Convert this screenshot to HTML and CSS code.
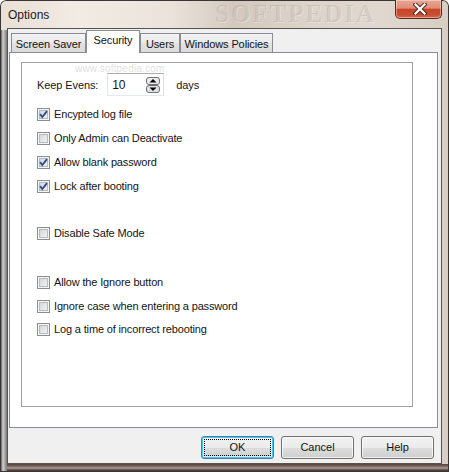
FILE: index.html
```html
<!DOCTYPE html>
<html>
<head>
<meta charset="utf-8">
<link rel="stylesheet" href="styles.css">
</head>
<body>
<div class="window">
  <div class="titlebar">
    <span class="title">Options</span>
    <span class="wm-title">SOFTPEDIA</span>
    <div class="close">
      <svg width="14" height="12" viewBox="0 0 14 12"><path d="M2.5 1.5 L11.5 10.5 M11.5 1.5 L2.5 10.5" stroke="#4a2a24" stroke-width="4.2" stroke-linecap="square"/><path d="M2.5 1.5 L11.5 10.5 M11.5 1.5 L2.5 10.5" stroke="#fff" stroke-width="2.2" stroke-linecap="square"/></svg>
    </div>
  </div>
  <div class="client">
    <div class="tabs">
      <div class="tab t-screen">Screen Saver</div>
      <div class="tab active t-sec">Security</div>
      <div class="tab t-users">Users</div>
      <div class="tab t-wp">Windows Policies</div>
    </div>
    <div class="panel">
      <div class="group">
        <span class="wm-url">www.softpedia.com</span>
        <div class="keep-row">
          <span>Keep Evens:</span>
          <div class="spin">
            <span class="spin-val">10</span>
            <svg class="spin-btn" width="14" height="16" viewBox="0 0 14 16">
              <rect x="0.5" y="0.5" width="13" height="7" rx="2.5" fill="#ececec" stroke="#707070"/>
              <rect x="0.5" y="8.5" width="13" height="7" rx="2.5" fill="#e2e2e2" stroke="#707070"/>
              <path d="M7 2 L10.5 5.5 H3.5 Z" fill="#000"/>
              <path d="M7 14 L10.5 10.5 H3.5 Z" fill="#000"/>
            </svg>
          </div>
          <span class="days">days</span>
        </div>
        <div class="opt m12"><span class="box checked"><svg viewBox="0 0 13 13" width="13" height="13"><path d="M3 6.2 L5.3 9 L10 3.2" fill="none" stroke="#31508a" stroke-width="1.9"/></svg></span><span class="lbl">Encypted log file</span></div>
        <div class="opt m11"><span class="box"></span><span class="lbl">Only Admin can Deactivate</span></div>
        <div class="opt m11"><span class="box checked"><svg viewBox="0 0 13 13" width="13" height="13"><path d="M3 6.2 L5.3 9 L10 3.2" fill="none" stroke="#31508a" stroke-width="1.9"/></svg></span><span class="lbl">Allow blank password</span></div>
        <div class="opt m11"><span class="box checked"><svg viewBox="0 0 13 13" width="13" height="13"><path d="M3 6.2 L5.3 9 L10 3.2" fill="none" stroke="#31508a" stroke-width="1.9"/></svg></span><span class="lbl">Lock after booting</span></div>
        <div class="opt m34"><span class="box"></span><span class="lbl">Disable Safe Mode</span></div>
        <div class="opt m36"><span class="box"></span><span class="lbl">Allow the Ignore button</span></div>
        <div class="opt m11"><span class="box"></span><span class="lbl">Ignore case when entering a password</span></div>
        <div class="opt m10"><span class="box"></span><span class="lbl">Log a time of incorrect rebooting</span></div>
      </div>
    </div>
    <div class="buttons">
      <div class="btn default">OK</div>
      <div class="btn">Cancel</div>
      <div class="btn">Help</div>
    </div>
  </div>
</div>
</body>
</html>
```
FILE: styles.css
```css
html, body {
  margin: 0;
  padding: 0;
  background: #ffffff;
}
body {
  width: 449px;
  height: 472px;
  overflow: hidden;
  font-family: "Liberation Sans", Arial, sans-serif;
  font-size: 11px;
  color: #141414;
}
.window {
  width: 449px;
  height: 472px;
  box-sizing: border-box;
  padding: 0 7px 8px 7px;
  display: flex;
  flex-direction: column;
  border-radius: 6px 6px 0 0;
  box-shadow: inset 0 0 0 1px #3b3633;
  background:
    linear-gradient(to right, #232323 0, #5e5e5e 1px, #d4d4d4 3px, #a0a0a0 5px, #7b7b7b 7px) left 30px / 7px 100% no-repeat,
    linear-gradient(#4a4440 0, #8a7670 3px, #b89a92 4px, #544c48 6px, #2a2624 8px) left bottom / 100% 8px no-repeat,
    linear-gradient(to right, #e9e0d6 0%, #f2ebe4 18%, #ebe3db 38%, #d3c9bf 52%, #ddd4cb 70%, #e0d8cf 85%, #d6cdc3 100%);
}
.titlebar {
  height: 28px;
  display: flex;
  align-items: flex-start;
  position: relative;
}
.title {
  font-size: 12px;
  line-height: 14px;
  margin: 8px 0 0 1px;
  color: #1a1a1a;
  position: relative;
  z-index: 1;
}
.wm-title {
  position: absolute;
  left: 208px;
  top: 1px;
  font-family: "Liberation Serif", serif;
  font-weight: bold;
  font-size: 25px;
  line-height: 26px;
  letter-spacing: 2px;
  color: rgba(120, 104, 92, 0.16);
  text-shadow: 1px 1px 0 rgba(255, 255, 255, 0.25);
  white-space: nowrap;
}
.close {
  margin-left: auto;
  width: 47px;
  height: 19px;
  box-sizing: border-box;
  border: 1px solid #5a2a20;
  border-top: none;
  border-radius: 0 0 5px 5px;
  background: linear-gradient(#e9a898 0%, #df8d77 45%, #c9462a 52%, #c84d31 80%, #d86a4e 100%);
  box-shadow: inset 0 0 0 1px rgba(255, 235, 225, 0.45);
  display: flex;
  align-items: center;
  justify-content: center;
  padding-left: 2px;
  position: relative;
  z-index: 1;
}
.client {
  flex: 1;
  border: 1px solid #57524e;
  background: #f0f0f0;
  display: flex;
  flex-direction: column;
}
.tabs {
  display: flex;
  align-items: flex-end;
  height: 23px;
  margin: 1px 0 -1px 3px;
  position: relative;
  z-index: 1;
}
.tab {
  box-sizing: border-box;
  height: 20px;
  border: 1px solid #898c95;
  background: linear-gradient(#f3f3f3, #e9e9e9 50%, #e1e1e1 51%, #dcdcdc);
  text-align: center;
  line-height: 13px;
  padding-top: 4px;
  white-space: nowrap;
  letter-spacing: -0.1px;
}
.tab.active {
  height: 23px;
  border-bottom: none;
  background: #ffffff;
  padding-top: 3px;
}
.t-screen { width: 75px; }
.t-sec { width: 54px; }
.t-users { width: 40px; }
.t-wp { width: 93px; }
.panel {
  height: 376px;
  box-sizing: border-box;
  margin: 0 3px 0 1px;
  border: 1px solid #898c95;
  background: #ffffff;
  display: flex;
  flex-direction: column;
}
.group {
  flex: 1;
  margin: 9px 24px 20px 11px;
  border: 1px solid #a0a0a0;
  padding-left: 15px;
  position: relative;
}
.wm-url {
  position: absolute;
  left: 53px;
  top: 1px;
  font-size: 10px;
  line-height: 10px;
  color: #e2e2e2;
  letter-spacing: 0.2px;
}
.keep-row {
  margin-top: 10px;
  height: 23px;
  display: flex;
  align-items: center;
  letter-spacing: -0.1px;
}
.spin {
  position: relative;
  width: 57px;
  height: 23px;
  box-sizing: border-box;
  margin-left: 9px;
  border: 1px solid;
  border-color: #abadb3 #dbdfe6 #e3e9ef #e2e3ea;
  background: #fff;
  display: flex;
  align-items: center;
}
.spin-val {
  padding-left: 4px;
  font-size: 12px;
}
.spin-btn {
  margin-left: auto;
  margin-right: 3px;
}
.days {
  margin-left: 12px;
}
.opt {
  height: 13px;
  display: flex;
  align-items: center;
  line-height: 13px;
}
.m10 { margin-top: 10px; }
.m11 { margin-top: 11px; }
.m12 { margin-top: 12px; }
.m34 { margin-top: 34px; }
.m36 { margin-top: 36px; }
.box {
  position: relative;
  width: 13px;
  height: 13px;
  box-sizing: border-box;
  border: 1px solid #8e8f8f;
  background:
    linear-gradient(135deg, #cdd0d5 0%, #e4e5e7 50%, #f7f7f7 100%) center / 9px 9px no-repeat,
    #f5f5f5;
  box-shadow: inset 0 0 0 1px #f4f4f4, inset 0 0 0 2px #b8bbc0;
  flex: none;
}
.box svg {
  position: absolute;
  left: -1px;
  top: -1px;
}
.lbl {
  margin-left: 4px;
  white-space: nowrap;
  letter-spacing: -0.15px;
}
.buttons {
  display: flex;
  justify-content: flex-end;
  gap: 7px;
  margin-top: 8px;
  padding-right: 7px;
}
.btn {
  position: relative;
  width: 73px;
  height: 23px;
  box-sizing: border-box;
  border: 1px solid #707070;
  border-radius: 3px;
  background: linear-gradient(#f2f2f2 0%, #ebebeb 50%, #dddddd 51%, #cfcfcf 100%);
  box-shadow: inset 0 0 0 1px rgba(255, 255, 255, 0.7);
  display: flex;
  align-items: center;
  justify-content: center;
  line-height: 13px;
}
.btn.default {
  border-color: #3c7fb1;
  box-shadow: inset 0 0 0 1px #48c6f4, inset 0 0 0 2px rgba(255, 255, 255, 0.5);
}
.btn.default::after {
  content: "";
  position: absolute;
  left: 2px;
  top: 2px;
  right: 2px;
  bottom: 2px;
  border: 1px dotted #000;
}
```
